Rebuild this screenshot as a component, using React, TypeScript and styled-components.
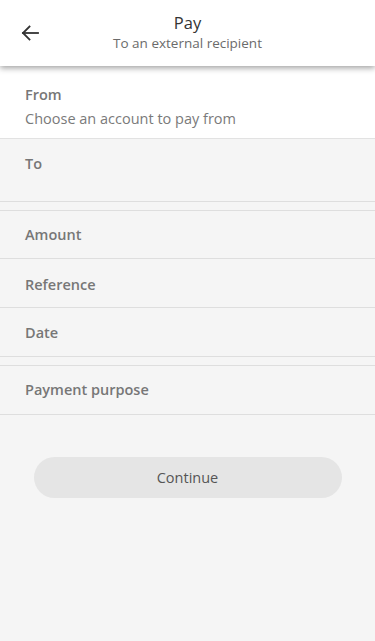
import React from "react";
import styled, { createGlobalStyle } from "styled-components";

const Global = createGlobalStyle`
  html, body { margin: 0; padding: 0; background: #f5f5f5; }
  body { font-family: "Open Sans", "Noto Sans", sans-serif; -webkit-font-smoothing: antialiased; }
  * { box-sizing: border-box; }
`;

const Page = styled.div`
  min-height: 641px;
  background: #f5f5f5;
  display: flex;
  flex-direction: column;
`;

const Header = styled.header`
  position: relative;
  z-index: 2;
  height: 66px;
  background: #ffffff;
  box-shadow: 0 2px 6px rgba(0, 0, 0, 0.38);
  display: grid;
  grid-template-columns: 58px 1fr 58px;
  align-items: center;
`;

const BackButton = styled.button`
  border: none;
  background: none;
  padding: 0;
  margin-left: 20px;
  width: 20px;
  height: 20px;
  display: flex;
  align-items: center;
  justify-content: center;
  color: #333;
  cursor: pointer;
`;

const TitleBlock = styled.div`
  display: flex;
  flex-direction: column;
  align-items: center;
  margin-top: -2px;
`;

const Title = styled.div`
  font-size: 16.5px;
  line-height: 22px;
  color: #333;
`;

const Subtitle = styled.div`
  font-size: 13.5px;
  line-height: 18px;
  color: #6b6b6b;
`;

const Section = styled.section<{ $height: number; $gapTop?: number }>`
  height: ${(p) => p.$height}px;
  background: #f5f5f5;
  border-bottom: 1px solid #dedede;
  border-top: ${(p) => (p.$gapTop ? "1px solid #dedede" : "none")};
  margin-top: ${(p) => p.$gapTop ?? 0}px;
  padding: 0 25px;
  display: flex;
  flex-direction: column;
`;

const Label = styled.div<{ $top?: number }>`
  font-size: 14.5px;
  font-weight: 600;
  line-height: 20px;
  color: #777777;
  margin-top: ${(p) => p.$top ?? 0}px;
`;

const Placeholder = styled.div`
  font-size: 14.5px;
  line-height: 20px;
  color: #7a7a7a;
  margin-top: 4px;
`;

const FromSection = styled.section`
  height: 73px;
  background: #fff;
  border-bottom: 1px solid #e2e2e2;
  padding: 19px 25px 0;
`;

const ButtonWrap = styled.div`
  display: flex;
  justify-content: center;
  padding: 42px 0 0;
`;

const ContinueButton = styled.button`
  width: 308px;
  height: 41px;
  border: none;
  border-radius: 21px;
  background: #e5e5e5;
  color: #555;
  font-family: "Open Sans", "Noto Sans", sans-serif;
  font-size: 14.5px;
  padding-top: 1px;
  cursor: pointer;
`;

const Arrow = () => (
  <svg width="18" height="16" viewBox="0 0 18 16" fill="none" stroke="currentColor" strokeWidth="1.8" strokeLinecap="square">
    <path d="M2 8H17" />
    <path d="M8.5 1.5L2 8L8.5 14.5" strokeLinejoin="miter" />
  </svg>
);

export default function App() {
  return (
    <>
      <Global />
      <Page>
        <Header>
          <BackButton aria-label="Back">
            <Arrow />
          </BackButton>
          <TitleBlock>
            <Title>Pay</Title>
            <Subtitle>To an external recipient</Subtitle>
          </TitleBlock>
          <div />
        </Header>
        <FromSection>
          <Label>From</Label>
          <Placeholder>Choose an account to pay from</Placeholder>
        </FromSection>
        <Section $height={63}>
          <Label $top={15}>To</Label>
        </Section>
        <Section $height={49} $gapTop={8}>
          <Label $top={14}>Amount</Label>
        </Section>
        <Section $height={49}>
          <Label $top={16}>Reference</Label>
        </Section>
        <Section $height={49}>
          <Label $top={15}>Date</Label>
        </Section>
        <Section $height={50} $gapTop={8}>
          <Label $top={14}>Payment purpose</Label>
        </Section>
        <ButtonWrap>
          <ContinueButton>Continue</ContinueButton>
        </ButtonWrap>
      </Page>
    </>
  );
}
